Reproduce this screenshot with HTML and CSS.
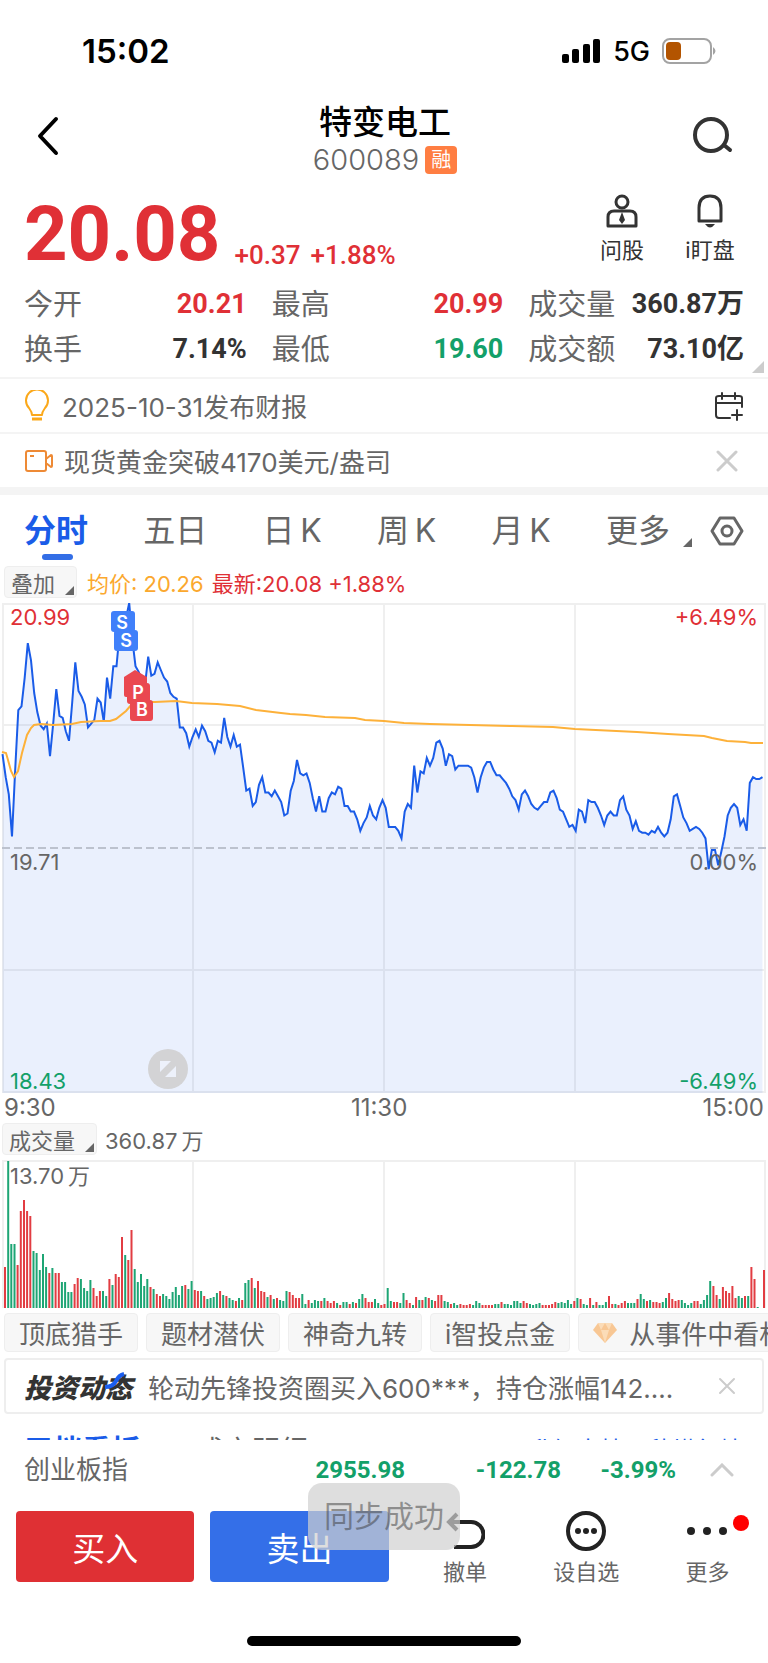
FILE: index.html
```html
<!DOCTYPE html>
<html lang="zh-CN">
<head>
    <meta charset="UTF-8">
    <meta name="viewport" content="width=device-width, initial-scale=1.0">
    <title>特变电工 600089</title>
    <link rel="stylesheet" href="styles.css">
</head>
<body>
    <div class="status">
        <div class="time">15:02</div>
        <div class="signal">
            <svg width="40" height="26" viewBox="0 0 40 26">
                <rect x="1" y="16" width="7" height="9" rx="2"/>
                <rect x="11" y="11" width="7" height="14" rx="2"/>
                <rect x="22" y="6" width="7" height="19" rx="2"/>
                <rect x="32" y="1" width="7" height="24" rx="2"/>
            </svg>
            <span class="net">5G</span>
            <svg width="54" height="26" viewBox="0 0 54 26">
                <rect x="1" y="1" width="48" height="24" rx="7" fill="#fff" stroke="#a3a3a3" stroke-width="2"/>
                <rect x="4" y="4" width="15" height="18" rx="4" fill="#b35400"/>
                <path d="M51 9q5 4 0 8z" fill="#a3a3a3"/>
            </svg>
        </div>
    </div>

    <header class="header">
        <button class="icon-btn" aria-label="返回">
            <svg width="24" height="40" viewBox="0 0 24 40"><path d="M20 3L4 20l16 17" fill="none" stroke="#000" stroke-width="4" stroke-linecap="round" stroke-linejoin="round"/></svg>
        </button>
        <div class="title">
            <h1>特变电工</h1>
            <div class="code">600089 <span class="badge">融</span></div>
        </div>
        <button class="icon-btn" aria-label="搜索">
            <svg width="42" height="40" viewBox="0 0 42 40"><circle cx="19" cy="19" r="16" fill="none" stroke="#333" stroke-width="4"/><path d="M32 29l6 5" stroke="#333" stroke-width="4" stroke-linecap="round"/></svg>
        </button>
    </header>

    <section class="quote">
        <div class="price">20.08</div>
        <div class="change"><span>+0.37</span><span>+1.88%</span></div>
        <button class="tool">
            <svg width="32" height="34" viewBox="0 0 32 34" fill="none" stroke="#333" stroke-width="3">
                <circle cx="16" cy="8" r="6"/>
                <path d="M2 32V23q0-6 6-6h16q6 0 6 6v9z" stroke-linejoin="round"/>
                <path d="M16 18l3 8-3 4-3-4z" fill="#333" stroke="none"/>
            </svg>
            <span>问股</span>
        </button>
        <button class="tool">
            <svg width="32" height="34" viewBox="0 0 32 34" fill="none" stroke="#333" stroke-width="3">
                <path d="M5 27V14q0-12 11-12t11 12v13z" stroke-linejoin="round"/>
                <path d="M11 30h10q-5 7-10 0z" fill="#333" stroke="none"/>
            </svg>
            <span>i盯盘</span>
        </button>
    </section>

    <dl class="stats">
        <div class="stat"><dt>今开</dt><dd class="red">20.21</dd></div>
        <div class="stat"><dt>最高</dt><dd class="red">20.99</dd></div>
        <div class="stat"><dt>成交量</dt><dd>360.87万</dd></div>
        <div class="stat"><dt>换手</dt><dd>7.14%</dd></div>
        <div class="stat"><dt>最低</dt><dd class="green">19.60</dd></div>
        <div class="stat"><dt>成交额</dt><dd>73.10亿</dd></div>
    </dl>

    <div class="notice">
        <svg width="28" height="32" viewBox="0 0 28 32" fill="none" stroke="#fba81a" stroke-width="2">
            <path d="M8 25q0-3-3-7a11 11 0 1 1 16 0q-3 4-3 7z" stroke-linejoin="round"/>
            <path d="M8 29h10" stroke-width="3"/>
        </svg>
        <p>2025-10-31发布财报</p>
        <button class="icon-btn" aria-label="添加日历">
            <svg width="30" height="30" viewBox="0 0 30 30" fill="none" stroke="#333" stroke-width="2" stroke-linecap="round">
                <path d="M16 27H5q-3 0-3-3V7q0-2 3-2h20q3 0 3 2v9M2 12h26M8 2v6M21 2v6"/>
                <path d="M23 19v10M18 24h10"/>
            </svg>
        </button>
    </div>
    <div class="notice">
        <svg width="30" height="32" viewBox="0 0 30 32" fill="none" stroke="#ee8a35" stroke-width="2">
            <rect x="2" y="6" width="20" height="20" rx="2"/>
            <path d="M22 14l5-4q1 0 1 1v10q0 1-1 1l-5-4z" stroke-linejoin="round"/>
            <path d="M6 11h4"/>
        </svg>
        <p>现货黄金突破4170美元/盎司</p>
        <button class="icon-btn close" aria-label="关闭">
            <svg width="22" height="22" viewBox="0 0 22 22"><path d="M2 2l18 18M20 2L2 20" stroke="#ccc" stroke-width="3" stroke-linecap="round"/></svg>
        </button>
    </div>

    <nav class="tabs">
        <div class="tab-list">
            <button class="tab active">分时</button>
            <button class="tab">五日</button>
            <button class="tab">日&thinsp;K</button>
            <button class="tab">周&thinsp;K</button>
            <button class="tab">月&thinsp;K</button>
            <button class="tab more">更多</button>
        </div>
        <button class="icon-btn" aria-label="设置">
            <svg width="34" height="32" viewBox="0 0 34 32" fill="none" stroke="#666" stroke-width="3">
                <path d="M10 3h14l8 13-8 13H10L2 16z" stroke-linejoin="round"/>
                <circle cx="17" cy="16" r="5"/>
            </svg>
        </button>
    </nav>

    <div class="legend">
        <button class="drop">叠加</button>
        <span class="avg">均价: 20.26</span>
        <span class="last">最新:20.08 +1.88%</span>
    </div>

    <div class="chart">
        <svg viewBox="0 0 768 490">
            <g class="grid">
                <path d="M2 1H766M2 122H766M2 367H766M2 489H766M3 0V490M193 0V490M384 0V490M575 0V490M765 0V490"/>
            </g>
            <path id="area" class="area"/>
            <path class="zero" d="M2 245H766"/>
            <path id="line" class="line"/>
            <path class="avg-line" d="M2 149L6 150 8 157 11 168 14 174 18 168 22 150 27 132 31 125 34 122 41 121 53 122 72 121 81 119 100 118 110 118 116 116 126 108 132 101 140 99 155 99 176 98 192 100 217 101 240 103 256 107 281 110 290 111 306 112 325 114 355 115 365 117 384 118 404 120 430 121 512 123 553 124 575 126 637 129 668 131 704 133 712 135 727 138 745 139 751 140 763 140"/>
            <g class="marks">
                <rect x="111" y="8" width="24" height="21" rx="3" fill="#4080fa"/>
                <text x="122" y="26">S</text>
                <rect x="114" y="27" width="24" height="21" rx="3" fill="#4080fa"/>
                <text x="126" y="44">S</text>
                <path d="M135 67l12 7v18q0 2-2 2h-19q-2 0-2-2V74z" fill="#ea4850"/>
                <rect x="127" y="80" width="23" height="21" rx="3" fill="#ea4850"/>
                <text x="138" y="96">P</text>
                <rect x="130" y="97" width="23" height="21" rx="3" fill="#ea4850"/>
                <text x="142" y="113">B</text>
            </g>
        </svg>
        <span class="label top left red">20.99</span>
        <span class="label top right red">+6.49%</span>
        <span class="label mid left">19.71</span>
        <span class="label mid right">0.00%</span>
        <span class="label bottom left green">18.43</span>
        <span class="label bottom right green">-6.49%</span>
        <button class="expand" aria-label="全屏">
            <svg width="40" height="40" viewBox="0 0 40 40"><circle cx="20" cy="20" r="20" fill="#d3d3d5"/><path d="M12 12h11L12 23zM28 17v11H17z" fill="#edf1fb"/></svg>
        </button>
    </div>
    <div class="axis"><span>9:30</span><span>11:30</span><span>15:00</span></div>

    <div class="legend volume-legend">
        <button class="drop">成交量</button>
        <span>360.87&thinsp;万</span>
    </div>
    <div class="chart volume">
        <svg viewBox="0 0 768 148">
            <g class="grid">
                <path d="M2 1H766M3 0V148M193 0V148M384 0V148M575 0V148M765 0V148"/>
            </g>
            <path id="up" class="up"/>
            <path id="down" class="down"/>
        </svg>
        <span class="label top left">13.70&thinsp;万</span>
    </div>

    <div class="chips">
        <button class="chip">顶底猎手</button>
        <button class="chip">题材潜伏</button>
        <button class="chip">神奇九转</button>
        <button class="chip">i智投点金</button>
        <button class="chip">
            <svg width="24" height="20" viewBox="0 0 24 20"><path d="M5 0h14l5 7-12 13L0 7z" fill="#f8c794"/><path d="M5 0l3 7 4-7 4 7 3-7M8 7l4 13 4-13z" fill="#fbdcb8"/></svg>
            从事件中看机会
        </button>
    </div>

    <div class="news">
        <div class="logo">投资动态
            <svg width="22" height="18" viewBox="0 0 22 18"><path d="M1 15q8 0 11-6t8-7" fill="none" stroke="#1a5ef0" stroke-width="4"/></svg>
        </div>
        <a href="#">轮动先锋投资圈买入600***，持仓涨幅142....</a>
        <button class="icon-btn" aria-label="关闭">
            <svg width="18" height="18" viewBox="0 0 18 18"><path d="M2 2l14 14M16 2L2 16" stroke="#ccc" stroke-width="2" stroke-linecap="round"/></svg>
        </button>
    </div>

    <!-- only the top edge shows above the footer -->
    <div class="depth">
        <span class="depth-active">五档看板</span>
        <span class="depth-tab">成交明细</span>
        <a href="#">升级十档，秒懂行情</a>
    </div>

    <footer class="footer">
        <div class="index">
            <span class="name">创业板指</span>
            <span>2955.98</span>
            <span>-122.78</span>
            <span>-3.99%</span>
            <button class="icon-btn" aria-label="展开">
                <svg width="24" height="14" viewBox="0 0 24 14"><path d="M2 12L12 2l10 10" fill="none" stroke="#ccc" stroke-width="3" stroke-linecap="round"/></svg>
            </button>
        </div>
        <div class="actions">
            <button class="trade buy">买入</button>
            <button class="trade sell">卖出</button>
            <button class="action">
                <svg width="40" height="40" viewBox="0 0 40 40" fill="none" stroke="#222" stroke-width="4"><path d="M4 11h22a12 12 0 0 1 0 25H9"/><path d="M12 3L4 11l8 8"/></svg>
                <span>撤单</span>
            </button>
            <button class="action">
                <svg width="40" height="40" viewBox="0 0 40 40"><circle cx="20" cy="20" r="18" fill="none" stroke="#222" stroke-width="4"/><g fill="#222"><circle cx="12" cy="20" r="3"/><circle cx="20" cy="20" r="3"/><circle cx="28" cy="20" r="3"/></g></svg>
                <span>设自选</span>
            </button>
            <button class="action">
                <svg width="40" height="40" viewBox="0 0 40 40" fill="#222"><circle cx="4" cy="20" r="4"/><circle cx="20" cy="20" r="4"/><circle cx="36" cy="20" r="4"/></svg>
                <span>更多</span>
                <i class="dot"></i>
            </button>
        </div>
        <div class="toast">同步成功</div>
        <div class="home"></div>
    </footer>
    <script src="script.js"></script>
</body>
</html>
```
FILE: styles.css
```css
* {
    margin: 0;
    padding: 0;
    box-sizing: border-box;
}
body {
    font-family: Inter, "Noto Sans CJK SC", sans-serif;
    color: #666;
    background: #fff;
    overflow-x: hidden;
}
button {
    font: inherit;
    color: inherit;
    background: none;
    border: 0;
}
svg {
    display: block;
    flex-shrink: 0;
}
a {
    color: inherit;
    text-decoration: none;
}
.red {
    color: #e03036;
}
.green {
    color: #13a069;
}

/* top */
.status {
    display: flex;
    justify-content: space-between;
    align-items: center;
    height: 102px;
    padding: 0 52px 0 82px;
    color: #000;
}
.time {
    font-size: 33px;
    font-weight: 600;
}
.signal {
    display: flex;
    align-items: center;
    gap: 12px;
}
.net {
    font-size: 27px;
    font-weight: 500;
}
.header {
    display: flex;
    justify-content: space-between;
    align-items: center;
    height: 68px;
    padding: 0 34px 0 36px;
    margin-bottom: 22px;
}
.title {
    text-align: center;
    padding: 8px 0 0 18px;
}
.title h1 {
    font-size: 33px;
    line-height: 40px;
    font-weight: 500;
    color: #000;
}
.code {
    display: flex;
    align-items: center;
    gap: 6px;
    font-size: 29px;
    line-height: 36px;
    font-weight: 300;
}
.badge {
    width: 32px;
    height: 28px;
    line-height: 28px;
    font-size: 20px;
    font-weight: 400;
    color: #fff;
    background: #ff7e42;
    border-radius: 4px;
}

/* quote */
.quote {
    display: flex;
    align-items: flex-end;
    height: 82px;
    padding: 0 24px;
}
.price, .change, .stat dd, .index {
    font-family: Roboto, "Noto Sans CJK SC", sans-serif;
    font-weight: 700;
}
.price {
    font-size: 76px;
    line-height: 80px;
    color: #e03036;
}
.change {
    display: flex;
    gap: 10px;
    flex: 1;
    margin-left: 14px;
    font-size: 26px;
    font-weight: 500;
    line-height: 38px;
    color: #e03036;
}
.tool {
    display: flex;
    flex-direction: column;
    align-items: center;
    gap: 6px;
    width: 88px;
    margin-bottom: 8px;
    font-size: 22px;
    line-height: 32px;
    color: #333;
}
.tool:last-child {
    margin-right: -10px;
}
.stats {
    position: relative;
    display: grid;
    grid-template-columns: 223fr 232fr 216fr;
    column-gap: 25px;
    padding: 8px 24px 5px;
}
.stats::after {
    content: "";
    position: absolute;
    right: 4px;
    bottom: 4px;
    border-left: 12px solid transparent;
    border-bottom: 12px solid #ccc;
}
.stat {
    display: flex;
    justify-content: space-between;
    line-height: 45px;
    font-size: 29px;
}
.stat dd {
    font-size: 27px;
    color: #333;
}
.stat .red {
    color: #e03036;
}
.stat .green {
    color: #13a069;
}

/* notices */
.notice {
    display: flex;
    align-items: center;
    gap: 10px;
    height: 55px;
    padding: 0 24px;
    border-top: 2px solid #f4f4f4;
    font-size: 26px;
}
.notice p {
    flex: 1;
}
.close {
    padding: 0 6px;
}

/* tabs */
.tabs {
    display: flex;
    align-items: center;
    height: 79px;
    padding: 0 24px;
    border-top: 8px solid #f4f4f4;
}
.tab-list {
    flex: 1;
    display: flex;
    justify-content: space-between;
    margin-right: 18px;
}
.tab {
    position: relative;
    font-size: 32px;
    line-height: 64px;
}
.active {
    font-weight: 700;
    color: #1a5ce8;
}
.active::after {
    content: "";
    position: absolute;
    left: 18px;
    bottom: 3px;
    width: 31px;
    height: 6px;
    border-radius: 3px;
    background: #336ee6;
}
.more {
    display: flex;
    align-items: center;
}
.more::after, .drop::after {
    content: "";
    margin: 16px 0 0 10px;
    border-left: 9px solid transparent;
    border-bottom: 9px solid #666;
}
.more::after {
    margin: 24px 0 0 13px;
}

/* charts */
.legend {
    display: flex;
    align-items: center;
    gap: 8px;
    height: 32px;
    margin: 0 4px 5px;
    font-size: 22px;
}
.drop {
    display: flex;
    align-items: center;
    height: 32px;
    padding: 0 2px 0 6px;
    font-size: 22px;
    background: #f7f7f7;
    border: 1px solid #eee;
    border-radius: 4px;
}
.avg {
    margin-left: 2px;
    color: #fba82e;
}
.last {
    color: #e03036;
}
.chart {
    position: relative;
}
.chart svg {
    width: 100%;
    height: auto;
}
.chart .expand {
    position: absolute;
    left: 148px;
    bottom: 4px;
    width: 40px;
}
.grid path {
    fill: none;
    stroke: #efefef;
    stroke-width: 2;
}
.area {
    fill: #1a5ce8;
    fill-opacity: 0.09;
}
.zero {
    stroke: #bcc2ce;
    stroke-width: 2;
    stroke-dasharray: 8 4;
}
.line {
    fill: none;
    stroke: #1a5ce8;
    stroke-width: 2;
}
.avg-line {
    fill: none;
    stroke: #fdb13a;
    stroke-width: 2;
}
.marks text {
    font-size: 18px;
    font-weight: 600;
    fill: #fff;
    text-anchor: middle;
}
.label {
    position: absolute;
    font-size: 22px;
    line-height: 28px;
}
.left {
    left: 10px;
}
.right {
    right: 10px;
}
.top {
    top: 0;
}
.mid {
    top: 50%;
}
.bottom {
    bottom: 0;
    line-height: 24px;
}
.axis {
    display: flex;
    justify-content: space-between;
    padding: 0 4px;
    font-size: 24px;
    line-height: 30px;
}
.volume-legend {
    margin-left: 2px;
}
.volume .up {
    fill: none;
    stroke: #e23c42;
    stroke-width: 2;
}
.volume .down {
    fill: none;
    stroke: #1da574;
    stroke-width: 2;
}
.volume .top {
    top: 2px;
}

/* below the charts */
.chips {
    display: flex;
    gap: 8px;
    padding: 5px 4px 6px;
    overflow: hidden;
}
.chip {
    display: flex;
    align-items: center;
    gap: 12px;
    flex-shrink: 0;
    height: 39px;
    padding: 0 14px;
    font-size: 26px;
    white-space: nowrap;
    background: #f7f7f7;
    border: 1px solid #eee;
    border-radius: 4px;
}
.news {
    display: flex;
    align-items: center;
    height: 56px;
    margin: 0 4px;
    padding: 0 26px 0 18px;
    font-size: 26px;
    border: 2px solid #eee;
    border-radius: 4px;
}
.news a {
    flex: 1;
    margin-left: 16px;
    white-space: nowrap;
}
.logo {
    position: relative;
    font-size: 27px;
    font-weight: 900;
    font-style: italic;
    color: #333;
}
.logo svg {
    position: absolute;
    right: 6px;
    top: 5px;
}
.depth {
    display: flex;
    height: 5px;
    margin-top: 21px;
    padding: 0 24px;
    line-height: 32px;
    overflow: hidden;
}
.depth-active {
    font-size: 29px;
    font-weight: 700;
    color: #1a5ce8;
}
.depth-tab {
    flex: 1;
    margin-left: 56px;
    font-size: 28px;
}
.depth a {
    font-size: 24px;
    color: #1a5ce8;
}

/* footer */
.footer {
    position: relative;
    background: #fff;
}
.index {
    display: grid;
    grid-template-columns: 1fr 156px 156px 115px 58px;
    align-items: center;
    height: 60px;
    padding: 0 34px 0 24px;
    font-size: 24px;
    text-align: right;
    color: #13a069;
}
.index .name {
    font-family: Inter, "Noto Sans CJK SC", sans-serif;
    font-size: 26px;
    line-height: 32px;
    font-weight: 400;
    text-align: left;
    color: #666;
}
.index svg {
    margin-left: 34px;
}
.actions {
    display: flex;
    padding: 11px 0 0 16px;
}
.trade {
    flex: 178;
    height: 71px;
    margin-right: 16px;
    font-size: 33px;
    color: #fff;
    border-radius: 4px;
}
.buy {
    background: #df3034;
}
.sell {
    background: #346fe8;
}
.action {
    position: relative;
    flex: 121;
    display: flex;
    flex-direction: column;
    align-items: center;
    gap: 5px;
    font-size: 22px;
    line-height: 32px;
}
.dot {
    position: absolute;
    right: 19px;
    top: 4px;
    width: 16px;
    height: 16px;
    border-radius: 50%;
    background: #f00;
}
.toast {
    position: absolute;
    left: 50%;
    top: 43px;
    transform: translateX(-50%);
    padding: 0 16px;
    font-size: 30px;
    line-height: 67px;
    color: rgba(60, 60, 60, 0.5);
    background: rgba(208, 208, 208, 0.7);
    border-radius: 14px;
}
.home {
    width: 274px;
    height: 10px;
    margin: 48px auto 17px;
    border-radius: 5px;
    background: #000;
}
```
FILE: script.js
```js
// price of each minute, in cents
const prices = [
    2020, 2008, 1999, 1977, 2012, 2043, 2045, 2060, 2078, 2069, 2052, 2042, 2035, 2033, 2036, 2019, 2036, 2054, 2040, 2039,
    2032, 2027, 2047, 2068, 2053, 2050, 2046, 2034, 2036, 2038, 2049, 2047, 2037, 2060, 2049, 2066, 2066, 2084, 2087, 2091,
    2099, 2080, 2066, 2063, 2059, 2056, 2071, 2061, 2062, 2068, 2064, 2060, 2058, 2052, 2050, 2049, 2034, 2034, 2031, 2024,
    2029, 2033, 2029, 2035, 2032, 2027, 2026, 2021, 2027, 2026, 2039, 2029, 2024, 2030, 2024, 2025, 2013, 2001, 2002, 1993,
    1995, 2004, 2008, 2000, 2000, 1998, 2001, 1998, 1995, 1988, 1989, 2001, 2006, 2017, 2010, 2009, 2010, 2005, 1997, 1990,
    1998, 1990, 1990, 1997, 2000, 1999, 2003, 2002, 1993, 1993, 1990, 1990, 1986, 1980, 1984, 1987, 1993, 1988, 1986, 1992,
    1996, 1992, 1982, 1982, 1982, 1980, 1976, 1990, 1994, 1992, 2014, 2000, 2011, 2010, 2018, 2014, 2018, 2026, 2027, 2023,
    2014, 2020, 2019, 2012, 2014, 2014, 2014, 2014, 2013, 2008, 2000, 2008, 2013, 2016, 2016, 2012, 2009, 2009, 2007, 2005,
    2002, 1998, 1996, 1991, 1999, 2001, 1998, 1994, 1992, 1991, 1993, 1995, 1995, 2000, 2001, 1997, 1991, 1990, 1986, 1982,
    1983, 1980, 1991, 1990, 1984, 1996, 1995, 1995, 1992, 1988, 1983, 1988, 1990, 1988, 1988, 1996, 1998, 1991, 1988, 1981,
    1985, 1980, 1979, 1979, 1978, 1980, 1979, 1982, 1979, 1977, 1979, 1986, 1998, 1999, 1993, 1987, 1984, 1980, 1981, 1982,
    1981, 1979, 1976, 1960, 1970, 1970, 1962, 1969, 1977, 1988, 1992, 1994, 1992, 1983, 1986, 1980, 2005, 2008, 2007, 2007,
    2008
];

// volume of each minute, r = up, g = down
const volumes = `r41 g147 g64 g64 r43 r97 r108 r97 r92 g57 g55 g38 g54 g41 r35 g40 r35 r35 g26 g26
g16 g16 r24 r30 g29 g20 g17 g28 r20 r12 r17 g17 g12 r29 g23 r34 r31 r71 g53 r48
r78 g39 g26 g34 g22 g29 r21 g19 r14 r12 g14 g12 g9 g16 g21 g13 g22 r23 g19 g27
r18 r17 g17 r12 g9 g10 g11 g15 r17 g13 r12 g10 g8 r7 g10 r8 g25 g28 r30 g20
r27 r17 r16 g11 r13 g9 r10 g8 g7 g17 r16 r13 r10 r10 g14 g4 r8 g5 g8 g7
r7 g10 r7 r5 r7 g5 r3 g6 g6 r4 g6 r5 g9 g14 r10 r6 r6 g9 g5 r3
r4 g20 g7 r6 r6 g5 g15 r8 r5 g3 r11 g8 r8 g11 r10 g8 r7 r13 r13 g7
g6 r4 g5 g3 r4 r3 r3 r4 g3 g7 g5 r3 r3 r3 r3 g4 g4 r6 g4 g4
g3 g7 g7 g5 r7 r5 g4 g3 g4 g5 r3 r3 r3 r4 r6 g5 g6 g5 g8 g4
r7 g10 r9 g4 g3 r10 g3 r6 g3 g3 g6 r12 r4 g4 r3 r5 r7 g5 g5 g5
r9 g14 g9 r7 g8 r6 r6 r5 g6 g10 r15 r9 r7 r8 g8 g5 g3 g5 r7 r7
g4 g8 g13 g27 r22 r13 g9 r21 r17 r15 r22 r10 g12 g10 r12 g12 r41 r29 g1 g0
r38`.split(/\s+/);

const points = prices.map((price, i) => {
    const x = 2.5 + i * 760 / 240;
    const y = (2099 - price) / 256 * 490;
    return x.toFixed(1) + ' ' + y.toFixed(1);
});
const line = 'M' + points.join('L');
document.getElementById('line').setAttribute('d', line);
document.getElementById('area').setAttribute('d', line + 'V490H2.5z');

let up = '';
let down = '';
volumes.forEach((item, i) => {
    const bar = 'M' + (5 + i * 759 / 240).toFixed(1) + ' 148v-' + item.slice(1);
    if (item[0] === 'r') {
        up += bar;
    } else {
        down += bar;
    }
});
document.getElementById('up').setAttribute('d', up);
document.getElementById('down').setAttribute('d', down);
```
